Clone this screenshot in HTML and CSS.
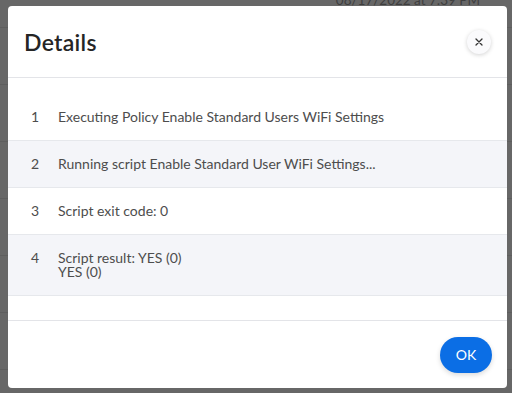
FILE: index.html
```html
<!DOCTYPE html>
<html lang="en">
<head>
  <meta charset="UTF-8">
  <title>Details</title>
  <link rel="stylesheet" href="styles.css">
</head>
<body>
  <div class="behind">
    <div class="behind-date">08/17/2022 at 7:39 PM</div>
    <div class="behind-row"></div>
    <div class="behind-row"></div>
    <div class="behind-row"></div>
    <div class="behind-row"></div>
    <div class="behind-row"></div>
    <div class="behind-row"></div>
    <div class="behind-row"></div>
  </div>

  <div class="modal">
    <div class="modal-header">
      <h2>Details</h2>
      <button class="close-btn" aria-label="Close">
        <svg width="8" height="8" viewBox="0 0 8 8"><path d="M1 1L7 7M7 1L1 7" stroke="#333" stroke-width="1.3" stroke-linecap="round"/></svg>
      </button>
    </div>

    <div class="modal-body">
      <div class="log-row">
        <span class="log-num">1</span>
        <span class="log-text">Executing Policy Enable Standard Users WiFi Settings</span>
      </div>
      <div class="log-row alt">
        <span class="log-num">2</span>
        <span class="log-text">Running script Enable Standard User WiFi Settings...</span>
      </div>
      <div class="log-row">
        <span class="log-num">3</span>
        <span class="log-text">Script exit code: 0</span>
      </div>
      <div class="log-row alt">
        <span class="log-num">4</span>
        <span class="log-text">Script result: YES (0)<br>YES (0)</span>
      </div>
    </div>

    <div class="modal-footer">
      <button class="ok-btn">OK</button>
    </div>
  </div>
</body>
</html>
```

FILE: styles.css
```css
body {
  margin: 0;
  background-color: #676767;
  font-family: 'Lato', 'Open Sans', sans-serif;
  height: 393px;
  overflow: hidden;
}

.behind {
  margin-top: -29px;
}

.behind-date {
  height: 0;
  text-align: right;
  padding-right: 32px;
  font-size: 13.5px;
  line-height: 59px;
  color: #3e3e3e;
}

.behind-row {
  height: 56px;
  border-bottom: 1px solid #5e5e5e;
}

.modal {
  position: absolute;
  top: 6px;
  left: 8px;
  width: 499px;
  height: 382px;
  background-color: white;
  border-radius: 4px;
  display: flex;
  flex-direction: column;
}

.modal-header {
  height: 72px;
  display: flex;
  align-items: center;
  justify-content: space-between;
  padding: 0 16px 0 16px;
  border-bottom: 1px solid #e3e4e8;
  box-sizing: border-box;
}

.modal-header h2 {
  margin: 0;
  font-size: 23px;
  font-weight: 600;
  color: #252525;
  letter-spacing: 0.3px;
}

.close-btn {
  width: 24px;
  height: 24px;
  border-radius: 50%;
  border: none;
  background-color: #fafafc;
  box-shadow: 0 1px 4px rgba(0, 0, 0, 0.18);
  display: flex;
  align-items: center;
  justify-content: center;
  padding: 0;
  margin-top: 1px;
}

.modal-body {
  padding: 16px 0 24px;
  border-bottom: 1px solid #e3e4e8;
}

.log-row {
  display: flex;
  padding: 16px 0 16px;
  border-bottom: 1px solid #e6e8ec;
  font-size: 14px;
  line-height: 14px;
  color: #4d4d4d;
}

.log-row.alt {
  background-color: #f4f5f9;
}

.log-num {
  width: 50px;
  padding-left: 23px;
  box-sizing: border-box;
}

.modal-footer {
  flex: 1;
  display: flex;
  align-items: center;
  justify-content: flex-end;
  padding: 0 15px;
}

.ok-btn {
  width: 52px;
  height: 36px;
  border: none;
  border-radius: 18px;
  background-color: #0b6ee5;
  color: white;
  font-family: 'Lato', sans-serif;
  font-size: 14px;
  box-shadow: 0 2px 5px rgba(0, 0, 0, 0.15);
}
```
